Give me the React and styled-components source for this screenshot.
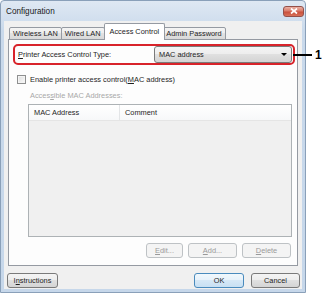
import styled, { createGlobalStyle } from "styled-components";

const GlobalStyle = createGlobalStyle`
    html, body {
        margin: 0;
        padding: 0;
        background: #ffffff;
    }
    body {
        font-family: "Liberation Sans", Arial, sans-serif;
        font-size: 7.4px;
        color: #1e1e1e;
    }
`;

const Page = styled.div`
    width: 324px;
    height: 295px;
    position: relative;
`;

const Window = styled.div`
    width: 306px;
    height: 293px;
    box-sizing: border-box;
    border: 1px solid #8aa0b9;
    border-radius: 4px 4px 0 0;
    background: linear-gradient(#dfe8f3, #c9d9eb 30px, #c6d7ea);
    padding: 0 3px 3px;
    display: flex;
    flex-direction: column;
`;

const TitleBar = styled.div`
    height: 20px;
    display: flex;
    align-items: center;
    justify-content: space-between;
    padding-left: 2px;
`;

const Title = styled.span`
    font-size: 8.2px;
    color: #1a1a1a;
`;

const CloseButton = styled.div`
    width: 21px;
    height: 11px;
    box-sizing: border-box;
    margin-right: -2px;
    border: 1px solid #94504a;
    border-radius: 3px;
    background: linear-gradient(#eab0a4, #d97a68 45%, #c9503d 55%, #d87158);
    display: flex;
    align-items: center;
    justify-content: center;
`;

const Client = styled.div`
    flex: 1;
    background: #f0f0f0;
    display: flex;
    flex-direction: column;
    padding-top: 2px;
`;

const TabStrip = styled.div`
    height: 17px;
    display: flex;
    align-items: flex-end;
    padding-left: 6px;
    position: relative;
    z-index: 2;
`;

const Tab = styled.div`
    height: ${(p) => (p.$active ? "17px" : "13px")};
    box-sizing: border-box;
    padding: 0 ${(p) => (p.$active ? "5px" : "3px")};
    margin-right: ${(p) => (p.$active ? "-2px" : "0")};
    margin-left: ${(p) => (p.$active ? "-1px" : "-1px")};
    border: 1px solid #959aa2;
    border-bottom: ${(p) => (p.$active ? "none" : "1px solid #959aa2")};
    border-radius: 2px 2px 0 0;
    background: ${(p) =>
        p.$active ? "#ffffff" : "linear-gradient(#f4f4f4, #ededed 50%, #e2e2e2 50%, #d9d9d9)"};
    position: relative;
    z-index: ${(p) => (p.$active ? 2 : 1)};
    display: flex;
    align-items: center;
    padding-bottom: ${(p) => (p.$active ? "2px" : "0")};
    white-space: nowrap;
`;

const Panel = styled.div`
    margin: -1px 4px 0;
    height: 227px;
    box-sizing: border-box;
    border: 1px solid #959aa2;
    background: #fdfdfd;
    padding: 4px 2px 0 4px;
    display: flex;
    flex-direction: column;
    position: relative;
    z-index: 1;
`;

const Highlight = styled.div`
    height: 21px;
    box-sizing: border-box;
    border: 2px solid #d8232a;
    border-radius: 5px;
    display: flex;
    align-items: center;
    justify-content: space-between;
    padding: 0 1px 0 3px;
    position: relative;
`;

const Callout = styled.div`
    position: absolute;
    left: 100%;
    top: 50%;
    transform: translateY(-50%);
    display: flex;
    align-items: center;
    z-index: 5;
`;

const CalloutLine = styled.div`
    width: 19px;
    height: 2px;
    background: #000;
`;

const CalloutNumber = styled.span`
    font-size: 12px;
    font-weight: bold;
    margin-left: 3px;
    line-height: 12px;
    color: #000;
`;

const Combo = styled.div`
    width: 138px;
    height: 17px;
    box-sizing: border-box;
    border: 1px solid #7a7a7a;
    border-radius: 3px;
    background: linear-gradient(#f4f4f4, #ededed 50%, #e0e0e0 50%, #d4d4d4);
    display: flex;
    align-items: center;
    justify-content: space-between;
    padding: 0 4px;
`;

const Arrow = styled.div`
    width: 0;
    height: 0;
    border-left: 3px solid transparent;
    border-right: 3px solid transparent;
    border-top: 3px solid #000;
`;

const CheckRow = styled.div`
    margin-top: 10px;
    height: 9px;
    display: flex;
    align-items: center;
    gap: 4px;
    padding-left: 4px;
`;

const CheckBox = styled.div`
    width: 9px;
    height: 9px;
    box-sizing: border-box;
    border: 1px solid #8e8f8f;
    background: linear-gradient(135deg, #dcdcdc, #fbfbfb);
    box-shadow: inset 0 0 0 1px #f4f4f4;
`;

const GrayLabel = styled.div`
    margin-top: 7px;
    height: 9px;
    line-height: 9px;
    padding-left: 17px;
    color: #a8a8a8;
`;

const ListBox = styled.div`
    margin: 4px 3px 0 15px;
    height: 133px;
    box-sizing: border-box;
    border: 1px solid #adb2b5;
    background: #f0f0f0;
    display: flex;
    flex-direction: column;
`;

const ListHeader = styled.div`
    height: 15px;
    display: flex;
    background: linear-gradient(#ffffff, #f7f8f9);
    border-bottom: 1px solid #e5e5e5;
`;

const HeaderCell = styled.div`
    width: ${(p) => p.$width};
    box-sizing: border-box;
    padding-left: 5px;
    display: flex;
    align-items: center;
    border-right: ${(p) => (p.$divider ? "1px solid #e3e5e7" : "none")};
`;

const ButtonRow = styled.div`
    margin: 6px 4px 0 0;
    display: flex;
    justify-content: flex-end;
    gap: 5px;
`;

const Button = styled.div`
    width: ${(p) => p.$width}px;
    height: 15px;
    box-sizing: border-box;
    border-radius: 3px;
    display: flex;
    align-items: center;
    justify-content: center;
    border: 1px solid ${(p) => (p.$disabled ? "#bec2c5" : p.$default ? "#4a8bbd" : "#7a7a7a")};
    color: ${(p) => (p.$disabled ? "#9a9a9a" : "#1e1e1e")};
    background: ${(p) =>
        p.$disabled
            ? "#f4f4f4"
            : p.$default
            ? "linear-gradient(#f1f8fd, #e6f1fa 50%, #d6e8f6 50%, #c8e0f3)"
            : "linear-gradient(#f4f4f4, #ededed 50%, #e0e0e0 50%, #d4d4d4)"};
`;

const BottomRow = styled.div`
    margin-top: 7px;
    padding: 0 2px 0 3px;
    display: flex;
    align-items: center;
    gap: 7px;
`;

const Spacer = styled.div`
    flex: 1;
`;

const Key = styled.span`
    text-decoration: underline;
    text-underline-offset: 1px;
`;

export default function App() {
    return (
        <Page>
            <GlobalStyle />
            <Window>
                <TitleBar>
                    <Title>Configuration</Title>
                    <CloseButton>
                        <svg width="8" height="6" viewBox="0 0 8 6">
                            <path d="M1 0.5 L7 5.5 M7 0.5 L1 5.5" stroke="#fff" strokeWidth="1.7" />
                        </svg>
                    </CloseButton>
                </TitleBar>
                <Client>
                    <TabStrip>
                        <Tab>Wireless LAN</Tab>
                        <Tab>Wired LAN</Tab>
                        <Tab $active>Access Control</Tab>
                        <Tab>Admin Password</Tab>
                    </TabStrip>
                    <Panel>
                        <Highlight>
                            <span>
                                <Key>P</Key>rinter Access Control Type:
                            </span>
                            <Combo>
                                <span>MAC address</span>
                                <Arrow />
                            </Combo>
                            <Callout>
                                <CalloutLine />
                                <CalloutNumber>1</CalloutNumber>
                            </Callout>
                        </Highlight>
                        <CheckRow>
                            <CheckBox />
                            <span>
                                Enable printer access control(<Key>M</Key>AC address)
                            </span>
                        </CheckRow>
                        <GrayLabel>
                            Acces<Key>s</Key>ible MAC Addresses:
                        </GrayLabel>
                        <ListBox>
                            <ListHeader>
                                <HeaderCell $width="91px" $divider>MAC Address</HeaderCell>
                                <HeaderCell $width="90px">Comment</HeaderCell>
                            </ListHeader>
                        </ListBox>
                        <ButtonRow>
                            <Button $width={37} $disabled>
                                <Key>E</Key>dit...
                            </Button>
                            <Button $width={49} $disabled>
                                <Key>A</Key>dd...
                            </Button>
                            <Button $width={49} $disabled>
                                <Key>D</Key>elete
                            </Button>
                        </ButtonRow>
                    </Panel>
                    <BottomRow>
                        <Button $width={51}>
                            I<Key>n</Key>structions
                        </Button>
                        <Spacer />
                        <Button $width={50} $default>OK</Button>
                        <Button $width={49}>Cancel</Button>
                    </BottomRow>
                </Client>
            </Window>
        </Page>
    );
}
